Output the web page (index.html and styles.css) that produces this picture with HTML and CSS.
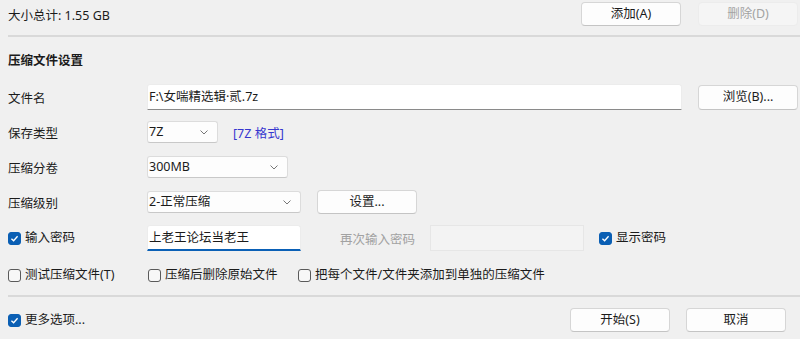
FILE: index.html
```html
<!DOCTYPE html>
<html lang="zh-CN">
<head>
<meta charset="utf-8">
<link rel="stylesheet" href="styles.css">
</head>
<body>
<div class="dialog">
  <div class="row top-row">
    <span class="total">大小总计: 1.55 GB</span>
    <div class="top-buttons">
      <button class="btn">添加(A)</button>
      <button class="btn disabled">删除(D)</button>
    </div>
  </div>
  <div class="sep sep-top"></div>
  <div class="section-title">压缩文件设置</div>

  <div class="row file-row">
    <span class="label">文件名</span>
    <div class="field file-field">F:\女喘精选辑·贰.7z</div>
    <button class="btn browse">浏览(B)...</button>
  </div>

  <div class="row type-row">
    <span class="label">保存类型</span>
    <div class="select sel-type"><span>7Z</span><svg class="chev" viewBox="0 0 8 5"><path d="M0.5 0.5 L4 4 L7.5 0.5" fill="none" stroke="#777" stroke-width="1"/></svg></div>
    <span class="format">[7Z 格式]</span>
  </div>

  <div class="row vol-row">
    <span class="label">压缩分卷</span>
    <div class="select sel-vol"><span>300MB</span><svg class="chev" viewBox="0 0 8 5"><path d="M0.5 0.5 L4 4 L7.5 0.5" fill="none" stroke="#777" stroke-width="1"/></svg></div>
  </div>

  <div class="row level-row">
    <span class="label">压缩级别</span>
    <div class="select sel-level"><span>2-正常压缩</span><svg class="chev" viewBox="0 0 8 5"><path d="M0.5 0.5 L4 4 L7.5 0.5" fill="none" stroke="#777" stroke-width="1"/></svg></div>
    <button class="btn settings">设置...</button>
  </div>

  <div class="row pwd-row">
    <label class="check label pwd-label"><span class="box on"><svg viewBox="0 0 10 10"><path d="M2.2 5.2 L4.2 7.1 L7.8 3" fill="none" stroke="#fff" stroke-width="1.2"/></svg></span>输入密码</label>
    <div class="field pwd-field">上老王论坛当老王</div>
    <span class="again">再次输入密码</span>
    <div class="field pwd2-field"></div>
    <label class="check show-pwd"><span class="box on"><svg viewBox="0 0 10 10"><path d="M2.2 5.2 L4.2 7.1 L7.8 3" fill="none" stroke="#fff" stroke-width="1.2"/></svg></span>显示密码</label>
  </div>

  <div class="row opts-row">
    <label class="check opt1"><span class="box"></span>测试压缩文件(T)</label>
    <label class="check opt2"><span class="box"></span>压缩后删除原始文件</label>
    <label class="check"><span class="box"></span>把每个文件/文件夹添加到单独的压缩文件</label>
  </div>

  <div class="sep sep-bottom"></div>

  <div class="row bottom-row">
    <label class="check"><span class="box on"><svg viewBox="0 0 10 10"><path d="M2.2 5.2 L4.2 7.1 L7.8 3" fill="none" stroke="#fff" stroke-width="1.2"/></svg></span>更多选项...</label>
    <div class="bottom-buttons">
      <button class="btn">开始(S)</button>
      <button class="btn">取消</button>
    </div>
  </div>
</div>
</body>
</html>
```

FILE: styles.css
```css
html, body {
  margin: 0;
  padding: 0;
  background: #f0f0f0;
}
body {
  width: 800px;
  height: 339px;
  overflow: hidden;
  font-family: "Noto Sans", "Noto Sans CJK SC", sans-serif;
  font-size: 12.5px;
  color: #1b1b1b;
}
.dialog {
  padding-left: 8px;
  display: flex;
  flex-direction: column;
}
.row {
  display: flex;
  align-items: center;
}
.btn {
  font-family: inherit;
  font-size: 12.5px;
  color: #1b1b1b;
  background: #fdfdfd;
  border: 1px solid #d6d6d6;
  border-bottom-color: #c4c4c4;
  border-radius: 4px;
  width: 100px;
  height: 24px;
  padding: 0;
  line-height: 20px;
}
.btn.disabled {
  background: #f5f5f5;
  border-color: #ececec;
  color: #a3a3a3;
}
.top-row {
  height: 24px;
  margin-top: 2px;
  justify-content: space-between;
}
.top-buttons {
  display: flex;
  gap: 17px;
  margin-right: 2px;
}
.sep {
  height: 2px;
  background: #d9d9d9;
}
.sep-top {
  margin-top: 9px;
}
.section-title {
  font-weight: bold;
  line-height: 20px;
  margin-top: 14px;
}
.label {
  width: 139px;
  flex: none;
}
.field {
  background: #fff;
  box-sizing: border-box;
  height: 26px;
  line-height: 24px;
  padding-left: 1px;
}
.file-row {
  margin-top: 13px;
  height: 26px;
}
.file-field {
  width: 535px;
  border: 1px solid #ececec;
  border-bottom: 1px solid #8a8a8a;
  border-radius: 3px 3px 0 0;
}
.browse {
  margin-left: 16px;
  height: 25px;
}
.select {
  box-sizing: border-box;
  height: 22px;
  background: #fdfdfd;
  border: 1px solid #dcdcdc;
  border-bottom-color: #c8c8c8;
  border-radius: 3px;
  display: flex;
  align-items: center;
  justify-content: space-between;
  padding: 0 9px 0 1px;
  line-height: 20px;
}
.chev {
  width: 8px;
  height: 5px;
}
.type-row {
  margin-top: 11px;
  height: 22px;
}
.sel-type {
  width: 71px;
}
.format {
  margin-left: 15px;
  color: #3737cf;
}
.vol-row {
  margin-top: 13px;
  height: 22px;
}
.sel-vol {
  width: 141px;
}
.level-row {
  margin-top: 12px;
  height: 24px;
}
.sel-level {
  width: 154px;
}
.settings {
  margin-left: 16px;
}
.pwd-row {
  margin-top: 11px;
  height: 26px;
}
.check {
  display: flex;
  align-items: center;
  line-height: 20px;
}
.box {
  box-sizing: border-box;
  width: 13px;
  height: 13px;
  border: 1px solid #5a5a5a;
  border-radius: 3px;
  margin-right: 4px;
  background: #f7f7f7;
  display: flex;
  align-items: center;
  justify-content: center;
  flex: none;
}
.box.on {
  background: #0a5fb4;
  border-color: #0a5fb4;
}
.box svg {
  width: 11px;
  height: 11px;
}
.pwd-field {
  width: 154px;
  border: 1px solid #ececec;
  border-bottom: 2px solid #0a60b6;
  border-radius: 3px 3px 0 0;
}
.again {
  margin-left: 39px;
  width: 90px;
  color: #a2a2a2;
}
.pwd2-field {
  width: 154px;
  background: #f3f3f3;
  border: 1px solid #e6e6e6;
}
.show-pwd {
  margin-left: 15px;
}
.opts-row {
  margin-top: 14px;
  height: 20px;
}
.opt1 {
  width: 140px;
}
.opt2 {
  width: 150px;
}
.sep-bottom {
  margin-top: 10px;
}
.bottom-row {
  margin-top: 11px;
  height: 24px;
  justify-content: space-between;
}
.bottom-buttons {
  display: flex;
  gap: 16px;
  margin-right: 14px;
}
```
